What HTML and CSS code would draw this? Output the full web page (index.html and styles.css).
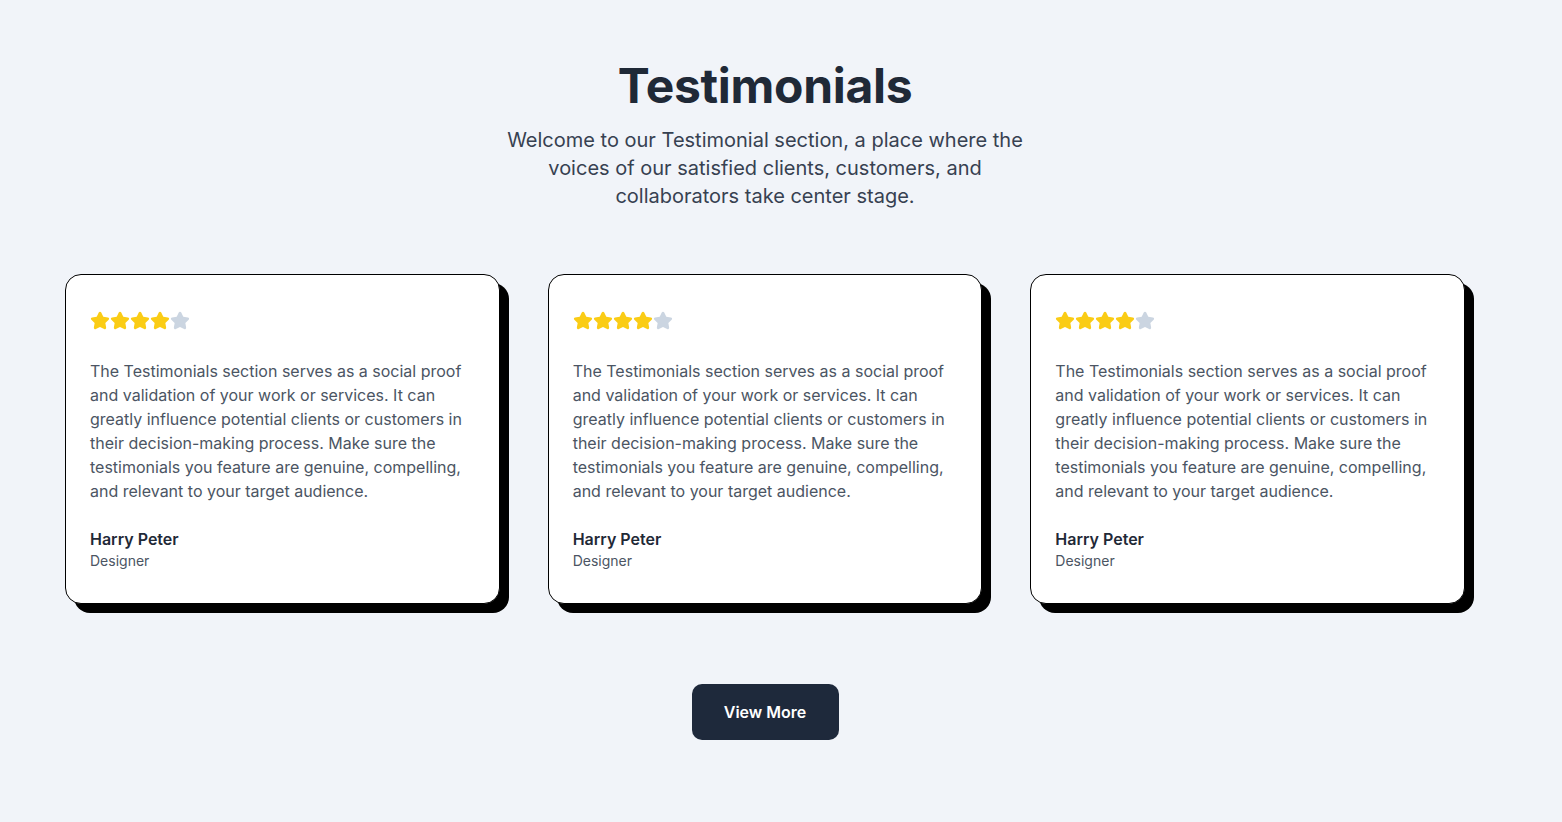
FILE: index.html
```html
<!DOCTYPE html>
<html lang="en">
<head>
<meta charset="utf-8">
<title>Testimonials</title>
<link rel="stylesheet" href="styles.css">
</head>
<body>
<section class="testimonials">
  <h2 class="title">Testimonials</h2>
  <p class="subtitle">Welcome to our Testimonial section, a place where the voices of our satisfied clients, customers, and collaborators take center stage.</p>
  <div class="cards">
    <article class="card">
      <div class="stars">
        <svg class="star on" viewBox="0 0 22 20"><path d="M20.924 7.625a1.523 1.523 0 0 0-1.238-1.044l-5.051-.734-2.259-4.577a1.534 1.534 0 0 0-2.752 0L7.365 5.847l-5.051.734A1.535 1.535 0 0 0 1.463 9.2l3.656 3.563-.863 5.031a1.532 1.532 0 0 0 2.226 1.616L11 17.033l4.518 2.375a1.534 1.534 0 0 0 2.226-1.617l-.863-5.030L20.537 9.2a1.523 1.523 0 0 0 .387-1.575Z"/></svg>
        <svg class="star on" viewBox="0 0 22 20"><path d="M20.924 7.625a1.523 1.523 0 0 0-1.238-1.044l-5.051-.734-2.259-4.577a1.534 1.534 0 0 0-2.752 0L7.365 5.847l-5.051.734A1.535 1.535 0 0 0 1.463 9.2l3.656 3.563-.863 5.031a1.532 1.532 0 0 0 2.226 1.616L11 17.033l4.518 2.375a1.534 1.534 0 0 0 2.226-1.617l-.863-5.03L20.537 9.2a1.523 1.523 0 0 0 .387-1.575Z"/></svg>
        <svg class="star on" viewBox="0 0 22 20"><path d="M20.924 7.625a1.523 1.523 0 0 0-1.238-1.044l-5.051-.734-2.259-4.577a1.534 1.534 0 0 0-2.752 0L7.365 5.847l-5.051.734A1.535 1.535 0 0 0 1.463 9.2l3.656 3.563-.863 5.031a1.532 1.532 0 0 0 2.226 1.616L11 17.033l4.518 2.375a1.534 1.534 0 0 0 2.226-1.617l-.863-5.03L20.537 9.2a1.523 1.523 0 0 0 .387-1.575Z"/></svg>
        <svg class="star on" viewBox="0 0 22 20"><path d="M20.924 7.625a1.523 1.523 0 0 0-1.238-1.044l-5.051-.734-2.259-4.577a1.534 1.534 0 0 0-2.752 0L7.365 5.847l-5.051.734A1.535 1.535 0 0 0 1.463 9.2l3.656 3.563-.863 5.031a1.532 1.532 0 0 0 2.226 1.616L11 17.033l4.518 2.375a1.534 1.534 0 0 0 2.226-1.617l-.863-5.03L20.537 9.2a1.523 1.523 0 0 0 .387-1.575Z"/></svg>
        <svg class="star off" viewBox="0 0 22 20"><path d="M20.924 7.625a1.523 1.523 0 0 0-1.238-1.044l-5.051-.734-2.259-4.577a1.534 1.534 0 0 0-2.752 0L7.365 5.847l-5.051.734A1.535 1.535 0 0 0 1.463 9.2l3.656 3.563-.863 5.031a1.532 1.532 0 0 0 2.226 1.616L11 17.033l4.518 2.375a1.534 1.534 0 0 0 2.226-1.617l-.863-5.03L20.537 9.2a1.523 1.523 0 0 0 .387-1.575Z"/></svg>
      </div>
      <p class="quote">The Testimonials section serves as a social proof and validation of your work or services. It can greatly influence potential clients or customers in their decision-making process. Make sure the testimonials you feature are genuine, compelling, and relevant to your target audience.</p>
      <div class="author">
        <div class="name">Harry Peter</div>
        <div class="role">Designer</div>
      </div>
    </article>
    <article class="card">
      <div class="stars">
        <svg class="star on" viewBox="0 0 22 20"><path d="M20.924 7.625a1.523 1.523 0 0 0-1.238-1.044l-5.051-.734-2.259-4.577a1.534 1.534 0 0 0-2.752 0L7.365 5.847l-5.051.734A1.535 1.535 0 0 0 1.463 9.2l3.656 3.563-.863 5.031a1.532 1.532 0 0 0 2.226 1.616L11 17.033l4.518 2.375a1.534 1.534 0 0 0 2.226-1.617l-.863-5.03L20.537 9.2a1.523 1.523 0 0 0 .387-1.575Z"/></svg>
        <svg class="star on" viewBox="0 0 22 20"><path d="M20.924 7.625a1.523 1.523 0 0 0-1.238-1.044l-5.051-.734-2.259-4.577a1.534 1.534 0 0 0-2.752 0L7.365 5.847l-5.051.734A1.535 1.535 0 0 0 1.463 9.2l3.656 3.563-.863 5.031a1.532 1.532 0 0 0 2.226 1.616L11 17.033l4.518 2.375a1.534 1.534 0 0 0 2.226-1.617l-.863-5.03L20.537 9.2a1.523 1.523 0 0 0 .387-1.575Z"/></svg>
        <svg class="star on" viewBox="0 0 22 20"><path d="M20.924 7.625a1.523 1.523 0 0 0-1.238-1.044l-5.051-.734-2.259-4.577a1.534 1.534 0 0 0-2.752 0L7.365 5.847l-5.051.734A1.535 1.535 0 0 0 1.463 9.2l3.656 3.563-.863 5.031a1.532 1.532 0 0 0 2.226 1.616L11 17.033l4.518 2.375a1.534 1.534 0 0 0 2.226-1.617l-.863-5.03L20.537 9.2a1.523 1.523 0 0 0 .387-1.575Z"/></svg>
        <svg class="star on" viewBox="0 0 22 20"><path d="M20.924 7.625a1.523 1.523 0 0 0-1.238-1.044l-5.051-.734-2.259-4.577a1.534 1.534 0 0 0-2.752 0L7.365 5.847l-5.051.734A1.535 1.535 0 0 0 1.463 9.2l3.656 3.563-.863 5.031a1.532 1.532 0 0 0 2.226 1.616L11 17.033l4.518 2.375a1.534 1.534 0 0 0 2.226-1.617l-.863-5.03L20.537 9.2a1.523 1.523 0 0 0 .387-1.575Z"/></svg>
        <svg class="star off" viewBox="0 0 22 20"><path d="M20.924 7.625a1.523 1.523 0 0 0-1.238-1.044l-5.051-.734-2.259-4.577a1.534 1.534 0 0 0-2.752 0L7.365 5.847l-5.051.734A1.535 1.535 0 0 0 1.463 9.2l3.656 3.563-.863 5.031a1.532 1.532 0 0 0 2.226 1.616L11 17.033l4.518 2.375a1.534 1.534 0 0 0 2.226-1.617l-.863-5.03L20.537 9.2a1.523 1.523 0 0 0 .387-1.575Z"/></svg>
      </div>
      <p class="quote">The Testimonials section serves as a social proof and validation of your work or services. It can greatly influence potential clients or customers in their decision-making process. Make sure the testimonials you feature are genuine, compelling, and relevant to your target audience.</p>
      <div class="author">
        <div class="name">Harry Peter</div>
        <div class="role">Designer</div>
      </div>
    </article>
    <article class="card">
      <div class="stars">
        <svg class="star on" viewBox="0 0 22 20"><path d="M20.924 7.625a1.523 1.523 0 0 0-1.238-1.044l-5.051-.734-2.259-4.577a1.534 1.534 0 0 0-2.752 0L7.365 5.847l-5.051.734A1.535 1.535 0 0 0 1.463 9.2l3.656 3.563-.863 5.031a1.532 1.532 0 0 0 2.226 1.616L11 17.033l4.518 2.375a1.534 1.534 0 0 0 2.226-1.617l-.863-5.03L20.537 9.2a1.523 1.523 0 0 0 .387-1.575Z"/></svg>
        <svg class="star on" viewBox="0 0 22 20"><path d="M20.924 7.625a1.523 1.523 0 0 0-1.238-1.044l-5.051-.734-2.259-4.577a1.534 1.534 0 0 0-2.752 0L7.365 5.847l-5.051.734A1.535 1.535 0 0 0 1.463 9.2l3.656 3.563-.863 5.031a1.532 1.532 0 0 0 2.226 1.616L11 17.033l4.518 2.375a1.534 1.534 0 0 0 2.226-1.617l-.863-5.03L20.537 9.2a1.523 1.523 0 0 0 .387-1.575Z"/></svg>
        <svg class="star on" viewBox="0 0 22 20"><path d="M20.924 7.625a1.523 1.523 0 0 0-1.238-1.044l-5.051-.734-2.259-4.577a1.534 1.534 0 0 0-2.752 0L7.365 5.847l-5.051.734A1.535 1.535 0 0 0 1.463 9.2l3.656 3.563-.863 5.031a1.532 1.532 0 0 0 2.226 1.616L11 17.033l4.518 2.375a1.534 1.534 0 0 0 2.226-1.617l-.863-5.03L20.537 9.2a1.523 1.523 0 0 0 .387-1.575Z"/></svg>
        <svg class="star on" viewBox="0 0 22 20"><path d="M20.924 7.625a1.523 1.523 0 0 0-1.238-1.044l-5.051-.734-2.259-4.577a1.534 1.534 0 0 0-2.752 0L7.365 5.847l-5.051.734A1.535 1.535 0 0 0 1.463 9.2l3.656 3.563-.863 5.031a1.532 1.532 0 0 0 2.226 1.616L11 17.033l4.518 2.375a1.534 1.534 0 0 0 2.226-1.617l-.863-5.03L20.537 9.2a1.523 1.523 0 0 0 .387-1.575Z"/></svg>
        <svg class="star off" viewBox="0 0 22 20"><path d="M20.924 7.625a1.523 1.523 0 0 0-1.238-1.044l-5.051-.734-2.259-4.577a1.534 1.534 0 0 0-2.752 0L7.365 5.847l-5.051.734A1.535 1.535 0 0 0 1.463 9.2l3.656 3.563-.863 5.031a1.532 1.532 0 0 0 2.226 1.616L11 17.033l4.518 2.375a1.534 1.534 0 0 0 2.226-1.617l-.863-5.03L20.537 9.2a1.523 1.523 0 0 0 .387-1.575Z"/></svg>
      </div>
      <p class="quote">The Testimonials section serves as a social proof and validation of your work or services. It can greatly influence potential clients or customers in their decision-making process. Make sure the testimonials you feature are genuine, compelling, and relevant to your target audience.</p>
      <div class="author">
        <div class="name">Harry Peter</div>
        <div class="role">Designer</div>
      </div>
    </article>
  </div>
  <button class="more" type="button">View More</button>
</section>
</body>
</html>
```

FILE: styles.css
```css
* { box-sizing: border-box; }

html, body {
  margin: 0;
  padding: 0;
  background: #f1f4f9;
}

body {
  font-family: Inter, "Noto Sans", "Liberation Sans", sans-serif;
  color: #1f2937;
  min-height: 822px;
}

.testimonials {
  width: 1530px;
  padding: 62px 65px 60px;
  display: flex;
  flex-direction: column;
  align-items: center;
}

.title {
  margin: 0;
  font-size: 48px;
  line-height: 48px;
  font-weight: 700;
  color: #1f2937;
  letter-spacing: -0.3px;
}

.subtitle {
  margin: 16px 0 0;
  max-width: 540px;
  text-align: center;
  font-size: 20px;
  line-height: 28px;
  color: #374151;
}

.cards {
  margin-top: 64px;
  width: 100%;
  display: grid;
  grid-template-columns: repeat(3, 1fr);
  gap: 48px;
}

.card {
  background: #ffffff;
  border: 1px solid #000000;
  border-radius: 16px;
  box-shadow: 9px 9px 0 #000000;
  padding: 35px 24px 32px;
  display: flex;
  flex-direction: column;
}

.stars {
  display: flex;
  height: 20px;
  align-items: center;
}

.star {
  width: 20px;
  height: 19px;
  display: block;
}

.star.on { fill: #facc15; }
.star.off { fill: #cbd5e1; }

.quote {
  margin: 29px 0 0;
  font-size: 16px;
  line-height: 24px;
  color: #4b5563;
}

.author {
  margin-top: 24px;
}

.name {
  font-size: 16px;
  line-height: 24px;
  font-weight: 600;
  color: #1f2937;
}

.role {
  font-size: 14px;
  line-height: 20px;
  color: #4b5563;
}

.more {
  margin-top: 80px;
  width: 147px;
  height: 56px;
  border: none;
  border-radius: 10px;
  background: #1e293b;
  color: #ffffff;
  font-family: Inter, "Noto Sans", "Liberation Sans", sans-serif;
  font-size: 16px;
  font-weight: 600;
  cursor: pointer;
}
```
